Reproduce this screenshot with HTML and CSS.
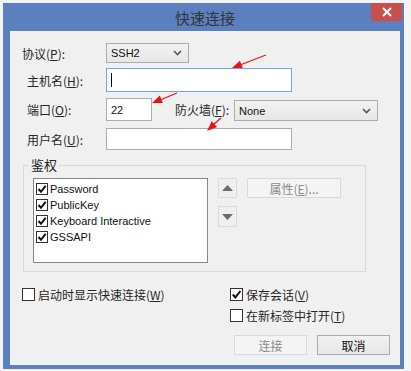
FILE: index.html
```html
<!DOCTYPE html>
<html lang="zh-CN">
<head>
    <meta charset="UTF-8">
    <title>快速连接</title>
    <link rel="stylesheet" href="styles.css">
</head>
<body>
    <div class="dialog">
        <!-- Barra de título -->
        <div class="titlebar">
            <span class="title">快速连接</span>
            <span class="close">
                <svg width="10" height="10" viewBox="0 0 10 10"><path d="M1 1L9 9M9 1L1 9" stroke="#fff" stroke-width="2"/></svg>
            </span>
        </div>

        <div class="client">
            <!-- Campos de conexão -->
            <div class="row row-1">
                <label class="lbl first">协议(<u>P</u>):</label>
                <div class="combo proto">
                    <span>SSH2</span>
                    <svg width="9" height="6" viewBox="0 0 9 6"><path d="M1 1L4.5 4.5L8 1" fill="none" stroke="#555" stroke-width="1.6"/></svg>
                </div>
            </div>
            <div class="row row-2">
                <label class="lbl">主机名(<u>H</u>):</label>
                <div class="field wide focused"><span class="caret"></span></div>
            </div>
            <div class="row row-3">
                <label class="lbl">端口(<u>O</u>):</label>
                <div class="field port">22</div>
                <label class="lbl-fw">防火墙(<u>F</u>):</label>
                <div class="combo firewall">
                    <span>None</span>
                    <svg width="9" height="6" viewBox="0 0 9 6"><path d="M1 1L4.5 4.5L8 1" fill="none" stroke="#555" stroke-width="1.6"/></svg>
                </div>
            </div>
            <div class="row row-4">
                <label class="lbl">用户名(<u>U</u>):</label>
                <div class="field wide"></div>
            </div>

            <!-- Grupo de autenticação -->
            <fieldset class="group">
                <legend>鉴权</legend>
                <div class="group-body">
                    <div class="listbox">
                        <div class="item"><span class="box small"><svg width="10" height="10" viewBox="0 0 10 10"><path d="M1.5 5L4 7.8L8.6 1.8" fill="none" stroke="#111" stroke-width="2"/></svg></span>Password</div>
                        <div class="item"><span class="box small"><svg width="10" height="10" viewBox="0 0 10 10"><path d="M1.5 5L4 7.8L8.6 1.8" fill="none" stroke="#111" stroke-width="2"/></svg></span>PublicKey</div>
                        <div class="item"><span class="box small"><svg width="10" height="10" viewBox="0 0 10 10"><path d="M1.5 5L4 7.8L8.6 1.8" fill="none" stroke="#111" stroke-width="2"/></svg></span>Keyboard Interactive</div>
                        <div class="item"><span class="box small"><svg width="10" height="10" viewBox="0 0 10 10"><path d="M1.5 5L4 7.8L8.6 1.8" fill="none" stroke="#111" stroke-width="2"/></svg></span>GSSAPI</div>
                    </div>
                    <div class="arrows">
                        <div class="btn-arrow"><svg width="11" height="6" viewBox="0 0 11 6"><path d="M0 6L5.5 0L11 6Z" fill="#6b6b6b"/></svg></div>
                        <div class="btn-arrow down"><svg width="11" height="6" viewBox="0 0 11 6"><path d="M0 0L5.5 6L11 0Z" fill="#6b6b6b"/></svg></div>
                    </div>
                    <div class="btn disabled props">属性(<u>E</u>)...</div>
                </div>
            </fieldset>

            <!-- Opções e botões -->
            <div class="bottom">
                <div class="check startup"><span class="box"></span>启动时显示快速连接(<u>W</u>)</div>
                <div class="right">
                    <div class="check"><span class="box"><svg width="11" height="11" viewBox="0 0 11 11"><path d="M1.8 5.5L4.4 8.4L9.4 2" fill="none" stroke="#111" stroke-width="2"/></svg></span>保存会话(<u>V</u>)</div>
                    <div class="check second"><span class="box"></span>在新标签中打开(<u>T</u>)</div>
                    <div class="buttons">
                        <div class="btn disabled">连接</div>
                        <div class="btn">取消</div>
                    </div>
                </div>
            </div>
        </div>
    </div>

    <!-- Setas vermelhas de anotação -->
    <svg class="marks" width="411" height="371" viewBox="0 0 411 371">
        <path d="M266 55L240 65" stroke="#e3141b" stroke-width="1.2"/>
        <polygon points="232,68 242.8,68.1 239.9,60.7" fill="#e3141b"/>
        <path d="M177 93L160 100" stroke="#e3141b" stroke-width="1.2"/>
        <polygon points="152,103 162.8,103 159.8,95.6" fill="#e3141b"/>
        <path d="M221 118L213 125" stroke="#e3141b" stroke-width="1.2"/>
        <polygon points="207,131 217.1,127.1 211.7,121.3" fill="#e3141b"/>
    </svg>
</body>
</html>
```

FILE: styles.css
```css
/* Reset básico */
* {
    margin: 0;
    padding: 0;
    box-sizing: border-box;
}

body {
    width: 411px;
    height: 371px;
    overflow: hidden;
    position: relative;
    background: #f3f4f6;
    font-family: "Noto Sans CJK SC", "Liberation Sans", sans-serif;
    font-size: 12px;
    color: #262626;
}

u {
    text-decoration: underline;
    text-underline-offset: 1px;
}

.dialog {
    margin: 3px 0 0 3px;
    width: 401px;
    height: 366px;
    background: #5b7fbf;
    display: flex;
    flex-direction: column;
    padding: 0 4px 4px 7px;
}

.titlebar {
    height: 28px;
    position: relative;
    display: flex;
    justify-content: center;
    align-items: center;
}

.title {
    font-size: 15px;
    color: #333;
}

.close {
    position: absolute;
    top: 0;
    right: -2px;
    width: 31px;
    height: 18px;
    background: #c7504f;
    display: flex;
    justify-content: center;
    align-items: center;
}

.client {
    flex: 1;
    background: #f0f0f0;
    padding-top: 12px;
}

.row {
    display: flex;
    align-items: center;
}

.row-1 { height: 20px; }
.row-2 { height: 24px; margin-top: 5px; }
.row-3 { height: 23px; margin-top: 6px; }
.row-4 { height: 22px; margin-top: 7px; }

.lbl {
    width: 96px;
    padding-left: 17px;
}

.lbl.first {
    padding-left: 12px;
}

.lbl-fw {
    margin-left: 23px;
    width: 59px;
}

.combo {
    height: 100%;
    border: 1px solid #acacac;
    background: linear-gradient(#f2f2f2, #e7e7e7);
    display: flex;
    align-items: center;
    justify-content: space-between;
    padding: 0 6px 0 4px;
    font-family: "Liberation Sans", sans-serif;
    font-size: 11px;
    color: #111;
}

.combo.proto {
    width: 83px;
}

.combo.firewall {
    width: 144px;
    height: 21px;
    margin-top: 2px;
}

.field {
    height: 100%;
    background: #fff;
    border: 1px solid #abadb3;
    display: flex;
    align-items: center;
    padding-left: 4px;
    font-family: "Liberation Sans", sans-serif;
    font-size: 11px;
    color: #111;
}

.field.wide {
    width: 186px;
}

.field.port {
    width: 46px;
}

.field.focused {
    border-color: #6fa8e0;
}

.caret {
    width: 1px;
    height: 14px;
    background: #000;
}

/* Grupo */
.group {
    margin: 7px 0 0 13px;
    width: 343px;
    border: 1px solid #d9d9d9;
    padding: 5px 8px 8px 9px;
}

.group legend {
    margin-left: -4px;
    padding: 0 2px;
    font-size: 13px;
    line-height: 16px;
}

.group-body {
    display: flex;
    align-items: flex-start;
}

.listbox {
    width: 175px;
    height: 85px;
    background: #fff;
    border: 1px solid #828790;
    padding: 2px 0 0 2px;
    font-family: "Liberation Sans", sans-serif;
    font-size: 11px;
    color: #111;
}

.item {
    height: 16px;
    display: flex;
    align-items: center;
}

.box {
    width: 13px;
    height: 13px;
    border: 1px solid #333;
    background: #fff;
    display: inline-flex;
    justify-content: center;
    align-items: center;
    margin-right: 3px;
    flex-shrink: 0;
}

.box.small {
    width: 12px;
    height: 12px;
    margin-right: 2px;
}

.arrows {
    margin-left: 10px;
    display: flex;
    flex-direction: column;
    gap: 8px;
}

.btn-arrow {
    width: 19px;
    height: 20px;
    border: 1px solid #dadada;
    display: flex;
    justify-content: center;
    align-items: center;
}

.btn-arrow.down {
    height: 21px;
}

.btn {
    width: 73px;
    height: 20px;
    border: 1px solid #acacac;
    background: linear-gradient(#f2f2f2, #e6e6e6);
    display: flex;
    justify-content: center;
    align-items: center;
    font-size: 12px;
    color: #111;
}

.btn.disabled {
    border-color: #d9d9d9;
    background: #f4f4f4;
    color: #8a8a8a;
}

.btn.props {
    width: 94px;
    margin-left: 10px;
}

/* Parte inferior */
.bottom {
    display: flex;
    margin-top: 16px;
}

.check {
    display: flex;
    align-items: center;
    height: 13px;
    font-size: 12px;
}

.check.startup {
    margin-left: 12px;
}

.check.second {
    margin-top: 8px;
}

.right {
    margin-left: auto;
    width: 170px;
}

.buttons {
    display: flex;
    gap: 10px;
    margin-top: 13px;
    padding-left: 4px;
}

.marks {
    position: absolute;
    top: 0;
    left: 0;
    pointer-events: none;
}
```
